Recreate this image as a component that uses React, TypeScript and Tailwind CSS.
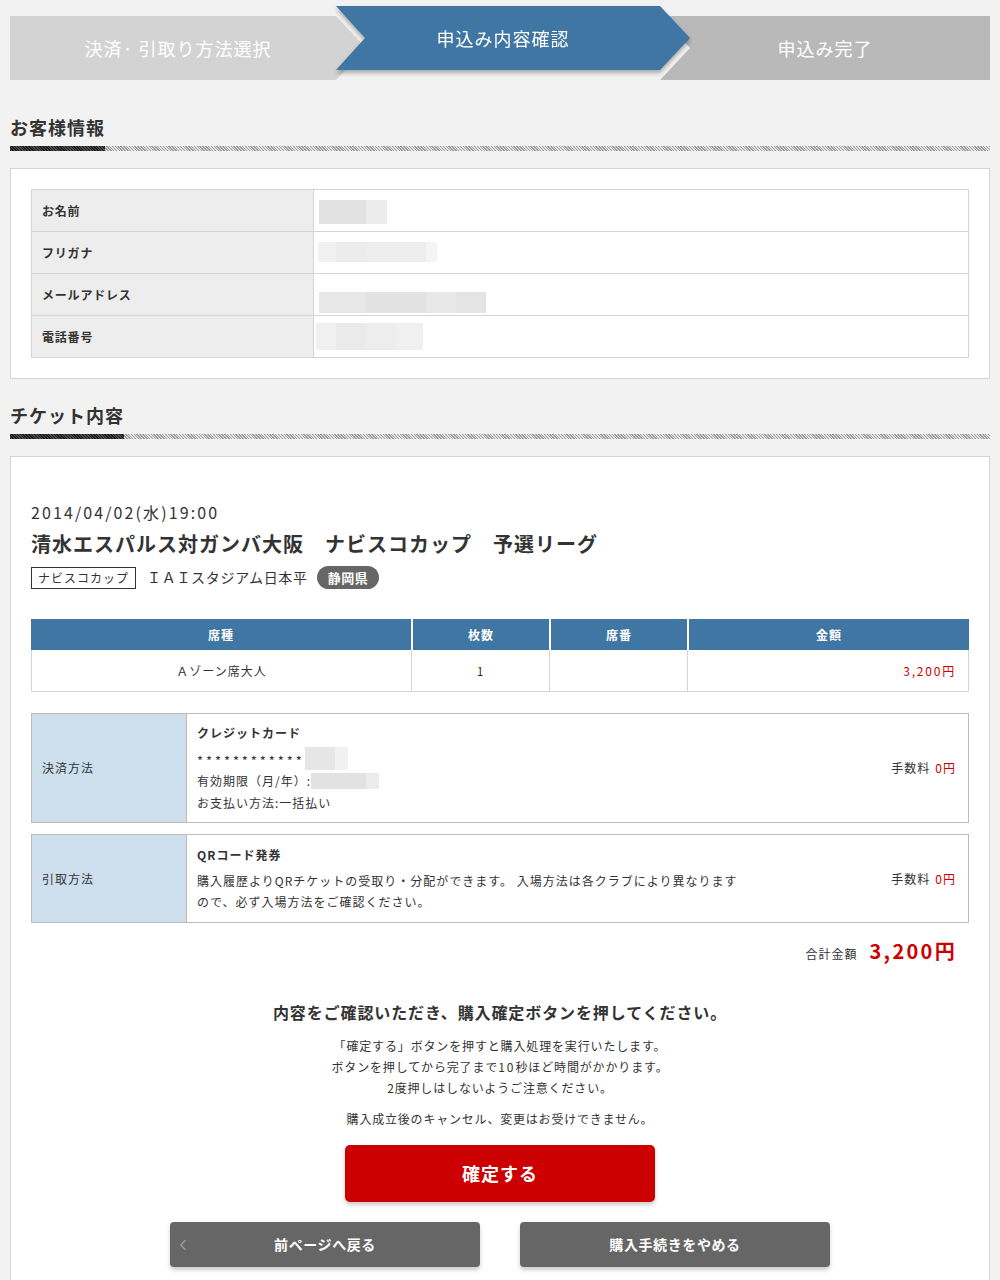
import React from "react";
import { ChevronLeft } from "lucide-react";

function SectionHeading({ title, darkClass }: { title: string; darkClass: string }) {
  return (
    <div className="px-[10px]">
      <h2 className="text-[18px] font-bold leading-[26px] tracking-[1px] text-[#333]">{title}</h2>
      <div className="mt-[6px] flex h-[5px]">
        <div className={darkClass + " h-full bg-[repeating-linear-gradient(45deg,#1e1e1e_0,#1e1e1e_1px,#4a4a4a_1px,#4a4a4a_2px)]"} />
        <div className="h-full flex-1 bg-[repeating-linear-gradient(45deg,#9d9d9d_0,#9d9d9d_1px,#e4e4e4_1px,#e4e4e4_2px)]" />
      </div>
    </div>
  );
}

function InfoRow({ label, children }: { label: string; children: React.ReactNode }) {
  return (
    <tr>
      <th className="h-[42px] w-[282px] border border-[#d5d5d5] bg-[#ededed] pl-[10px] text-left text-[12px] font-bold tracking-[0.8px] text-[#333]">
        {label}
      </th>
      <td className="h-[42px] border border-[#d5d5d5] bg-white p-0">{children}</td>
    </tr>
  );
}

export default function App() {
  return (
    <div className="min-h-[1300px] bg-[#f2f2f2] font-['Noto_Sans_CJK_JP','Noto_Sans',sans-serif] text-[#333]">
      {/* Steps */}
      <div className="flex items-start px-[10px] pt-[6px]">
        <div className="mt-[10px] flex h-[64px] w-[356px] items-center justify-center bg-[#d3d3d3] pr-[20px] text-[18px] tracking-[1px] text-white [clip-path:polygon(0_0,326px_0,356px_50%,326px_100%,0_100%)]">
          決済· 引取り方法選択
        </div>
        <div className="relative z-10 -ml-[30px] [filter:drop-shadow(0_3px_2px_rgba(0,0,0,0.3))]">
          <div className="flex h-[64px] w-[354px] items-center justify-center bg-[#3f76a3] pr-[20px] text-[18px] tracking-[1px] text-white [clip-path:polygon(0_0,324px_0,354px_50%,324px_100%,0_100%,29px_50%)]">
            申込み内容確認
          </div>
        </div>
        <div className="-ml-[30px] mt-[10px] flex h-[64px] flex-1 items-center justify-center bg-[#b9b9b9] text-[18px] tracking-[1px] text-white [clip-path:polygon(0_0,100%_0,100%_100%,0_100%,30px_50%)]">
          申込み完了
        </div>
      </div>

      {/* Customer info */}
      <div className="mt-[34px]">
        <SectionHeading title="お客様情報" darkClass="w-[95px]" />
      </div>
      <div className="mx-[10px] mt-[17px] border border-[#d5d5d5] bg-white p-[20px]">
        <table className="w-full border-collapse">
          <tbody>
            <InfoRow label="お名前">
              <div className="ml-[5px] mt-[3px] flex h-[24px]">
                <div className="w-[47px] bg-[#e2e2e2]" />
                <div className="w-[21px] bg-[#ececec]" />
              </div>
            </InfoRow>
            <InfoRow label="フリガナ">
              <div className="ml-[4px] mb-[2px] flex h-[20px]">
                <div className="w-[18px] bg-[#f1f1f1]" />
                <div className="w-[30px] bg-[#ececec]" />
                <div className="w-[60px] bg-[#eeeeee]" />
                <div className="w-[11px] bg-[#f4f4f6]" />
              </div>
            </InfoRow>
            <InfoRow label="メールアドレス">
              <div className="ml-[5px] mt-[16px] flex h-[21px]">
                <div className="w-[47px] bg-[#e7e7e7]" />
                <div className="w-[60px] bg-[#e2e2e2]" />
                <div className="w-[30px] bg-[#e8e8e8]" />
                <div className="w-[30px] bg-[#e4e4e4]" />
              </div>
            </InfoRow>
            <InfoRow label="電話番号">
              <div className="ml-[2px] flex h-[27px]">
                <div className="w-[20px] bg-[#f0f0f0]" />
                <div className="w-[30px] bg-[#eaeaea]" />
                <div className="w-[30px] bg-[#ededed]" />
                <div className="w-[27px] bg-[#f0f0f0]" />
              </div>
            </InfoRow>
          </tbody>
        </table>
      </div>

      {/* Ticket */}
      <div className="mt-[23px]">
        <SectionHeading title="チケット内容" darkClass="w-[114px]" />
      </div>
      <div className="mx-[10px] mt-[17px] border border-[#d5d5d5] bg-white px-[20px] pb-[40px] pt-[43px]">
        <p className="text-[16px] leading-[24px] tracking-[2.1px]">2014/04/02(水)19:00</p>
        <p className="mt-[6px] text-[20px] font-bold leading-[28px] tracking-[1px]">
          清水エスパルス対ガンバ大阪　ナビスコカップ　予選リーグ
        </p>
        <div className="mt-[8px] flex h-[23px] items-center">
          <span className="flex h-[22px] items-center border border-[#333] px-[6px] text-[12px] tracking-[1px]">
            ナビスコカップ
          </span>
          <span className="ml-[11px] text-[14px] tracking-[0.7px]">ＩＡＩスタジアム日本平</span>
          <span className="ml-[9px] flex h-[23px] items-center rounded-full bg-[#666] px-[11px] text-[13px] font-bold tracking-[0.5px] text-white">
            静岡県
          </span>
        </div>

        {/* Seat table */}
        <div className="mt-[30px]">
          <div className="grid h-[31px] grid-cols-[380px_138px_138px_1fr] bg-[#3f76a3] text-[12px] font-bold tracking-[1px] text-white">
            <div className="flex items-center justify-center">席種</div>
            <div className="flex items-center justify-center border-l-2 border-white">枚数</div>
            <div className="flex items-center justify-center border-l-2 border-white">席番</div>
            <div className="flex items-center justify-center border-l-2 border-white">金額</div>
          </div>
          <div className="grid h-[42px] grid-cols-[380px_138px_138px_1fr] border-b border-r border-[#d5d5d5] text-[12px] tracking-[1px]">
            <div className="flex items-center justify-center border-l border-[#d5d5d5]">Ａゾーン席大人</div>
            <div className="flex items-center justify-center border-l border-[#d5d5d5]">1</div>
            <div className="border-l border-[#d5d5d5]" />
            <div className="flex items-center justify-end border-l border-[#d5d5d5] pr-[12px] tracking-[1.8px] text-[#cc0000]">3,200円</div>
          </div>
        </div>

        {/* Payment */}
        <div className="mt-[21px] flex border border-[#bbb] text-[12px] tracking-[1px]">
          <div className="flex w-[155px] items-center border-r border-[#bbb] bg-[#cddeec] pl-[10px]">決済方法</div>
          <div className="flex-1 pb-[9px] pl-[10px] pt-[8px]">
            <p className="font-bold leading-[22px]">クレジットカード</p>
            <div className="flex h-[26px] items-center">
              <span className="relative top-[4px] text-[13px] tracking-[2.9px]">************</span>
              <span className="mt-[2px] flex h-[23px]">
                <span className="w-[30px] bg-[#e6e6e6]" />
                <span className="w-[13px] bg-[#f1f1f1]" />
              </span>
            </div>
            <div className="flex h-[22px] items-center">
              <span>有効期限（月/年）:</span>
              <span className="flex h-[16px]">
                <span className="w-[55px] bg-[#e2e2e2]" />
                <span className="w-[13px] bg-[#ececec]" />
              </span>
            </div>
            <p className="leading-[21px]">お支払い方法:一括払い</p>
          </div>
          <div className="flex items-center pr-[12px]">
            手数料 <span className="ml-[5px] text-[#cc0000]">0円</span>
          </div>
        </div>

        <div className="mt-[11px] flex border border-[#bbb] text-[12px] tracking-[1px]">
          <div className="flex w-[155px] items-center border-r border-[#bbb] bg-[#cddeec] pl-[10px]">引取方法</div>
          <div className="flex-1 pb-[10px] pl-[10px] pt-[9px]">
            <p className="font-bold leading-[22px]">QRコード発券</p>
            <p className="mt-[4px] leading-[21px]">
              購入履歴よりQRチケットの受取り・分配ができます。 入場方法は各クラブにより異なります
              <br />
              ので、必ず入場方法をご確認ください。
            </p>
          </div>
          <div className="flex items-center pr-[12px]">
            手数料 <span className="ml-[5px] text-[#cc0000]">0円</span>
          </div>
        </div>

        {/* Total */}
        <div className="mt-[14px] flex items-baseline justify-end pr-[12px]">
          <span className="text-[12px] tracking-[1px]">合計金額</span>
          <span className="ml-[12px] text-[20px] font-bold leading-[28px] tracking-[2.3px] text-[#cc0000]">3,200円</span>
        </div>

        {/* Confirm */}
        <div className="mt-[35px] flex flex-col items-center text-center">
          <p className="text-[16px] font-bold leading-[24px] tracking-[0.9px]">
            内容をご確認いただき、購入確定ボタンを押してください。
          </p>
          <p className="mt-[11px] text-[12px] leading-[21px] tracking-[0.85px]">
            「確定する」ボタンを押すと購入処理を実行いたします。
            <br />
            ボタンを押してから完了まで<span className="tracking-[2px]">10</span>秒ほど時間がかかります。
            <br />
            2度押しはしないようご注意ください。
          </p>
          <p className="mt-[10px] text-[12px] leading-[21px] tracking-[0.8px]">
            購入成立後のキャンセル、変更はお受けできません。
          </p>
          <button className="mt-[16px] flex h-[57px] w-[310px] items-center justify-center rounded-[5px] bg-[#cc0000] text-[18px] font-bold tracking-[1px] text-white shadow-[0_3px_4px_rgba(0,0,0,0.2)]">
            確定する
          </button>
          <div className="mt-[20px] flex gap-[40px]">
            <button className="relative flex h-[45px] w-[310px] items-center justify-center rounded-[4px] bg-[#666] text-[14px] font-bold tracking-[0.6px] text-white shadow-[0_3px_4px_rgba(0,0,0,0.2)]">
              <ChevronLeft className="absolute left-[4px] top-1/2 -translate-y-1/2 text-[#a0a0a0]" size={18} strokeWidth={1.6} />
              前ページへ戻る
            </button>
            <button className="flex h-[45px] w-[310px] items-center justify-center rounded-[4px] bg-[#666] text-[14px] font-bold tracking-[0.6px] text-white shadow-[0_3px_4px_rgba(0,0,0,0.2)]">
              購入手続きをやめる
            </button>
          </div>
        </div>
      </div>
    </div>
  );
}
